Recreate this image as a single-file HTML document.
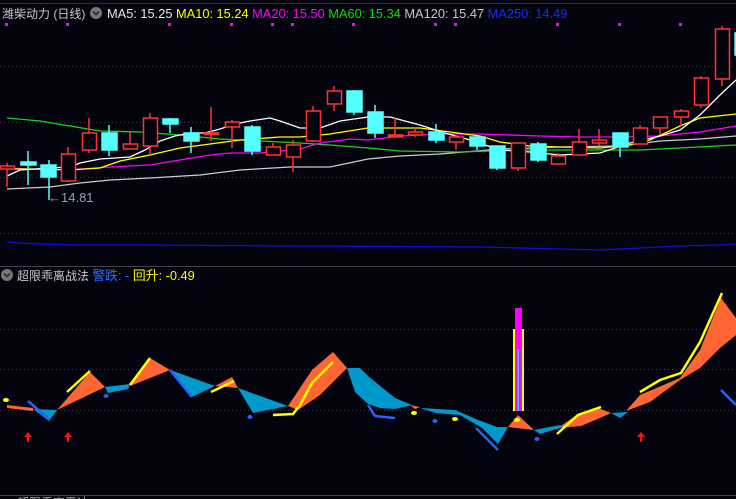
<!DOCTYPE html>
<html><head><meta charset="utf-8"><style>
html,body{margin:0;padding:0;background:#04040f;width:736px;height:499px;overflow:hidden;font-family:"Liberation Sans","Noto Sans CJK SC",sans-serif}
svg{position:absolute;left:0;top:0}
.t{font-size:12.8px;font-family:"Liberation Sans","Noto Sans CJK SC",sans-serif}
</style></head><body>
<svg width="736" height="499" viewBox="0 0 736 499">
<rect width="736" height="499" fill="#04040f"/>
<g stroke="#3c3c46" stroke-dasharray="1,3" stroke-width="1">
<line x1="0" y1="66.5" x2="736" y2="66.5"/><line x1="0" y1="122.5" x2="736" y2="122.5"/>
<line x1="0" y1="177.5" x2="736" y2="177.5"/><line x1="0" y1="233.5" x2="736" y2="233.5"/>
<line x1="0" y1="329.5" x2="736" y2="329.5"/><line x1="0" y1="369.5" x2="736" y2="369.5"/>
<line x1="0" y1="410.5" x2="736" y2="410.5"/>
</g>
<line x1="0" y1="266.5" x2="736" y2="266.5" stroke="#444" />
<line x1="0" y1="495.5" x2="736" y2="495.5" stroke="#444"/>
<line x1="0" y1="3.5" x2="736" y2="3.5" stroke="#333"/>
<g fill="none" stroke-width="1.3">
<polyline stroke="#0a10e0" points="7,242 18,243 40,244 80,245 140,245 300,246 480,247 560,249 600,250 640,248 680,246 720,245 736,244"/>
<polyline stroke="#ccc" points="7,189 50,187 80,183 110,180 150,178 200,175 240,170 290,167 330,167 368,159 400,156 440,154 500,149 560,147 620,146 660,141 700,139 736,136"/>
<polyline stroke="#1ed01e" points="7,118 40,121 70,126 100,131 140,132 180,135 220,139 260,141 300,143 330,145 368,148 400,151 460,152 520,150 580,150 640,150 680,148 736,145"/>
<polyline stroke="#f0f" points="7,168 50,170 80,169 110,167 150,165 180,160 210,155 230,153 260,153 300,149 320,143 350,139 368,140 400,136 440,134 480,134 540,136 580,137 620,137 660,136 700,132 736,126"/>
<polyline stroke="#ff0" points="7,169 40,169 70,170 100,168 120,161 150,155 180,148 210,144 240,140 280,137 300,137 330,134 368,128 420,128 450,132 480,136 500,142 530,146 560,147 600,148 630,145 650,140 680,126 700,118 736,114"/>
<polyline stroke="#fff" points="7,176 20,170 50,168 70,167 80,163 100,159 130,157 145,150 160,141 175,136 190,133 205,133 220,129 235,124 250,121 270,118 280,121 300,128 320,128 340,121 368,117 390,117 420,125 445,133 470,140 500,150 530,152 560,155 600,153 630,143 660,136 680,130 700,115 720,95 736,80"/>
</g>
<g stroke-width="1.5">
<g stroke="#ff3333" fill="#04040f">
<line x1="7" y1="163" x2="7" y2="187"/><rect x="0.5" y="166" width="14" height="3"/>
<line x1="68" y1="147" x2="68" y2="182"/><rect x="61.5" y="154" width="14" height="27"/>
<line x1="89" y1="118" x2="89" y2="153"/><rect x="82.5" y="133" width="14" height="17"/>
<line x1="130" y1="132" x2="130" y2="149"/><rect x="123.5" y="144" width="14" height="5"/>
<line x1="150" y1="113" x2="150" y2="155"/><rect x="143.5" y="118" width="14" height="28"/>
<line x1="211" y1="107" x2="211" y2="141"/><rect x="204.5" y="133" width="14" height="1.5" fill="#ff3333"/>
<line x1="232" y1="120" x2="232" y2="148"/><rect x="225.5" y="122" width="14" height="5"/>
<line x1="273" y1="143" x2="273" y2="155"/><rect x="266.5" y="147" width="14" height="8"/>
<line x1="293" y1="140" x2="293" y2="172"/><rect x="286.5" y="145" width="14" height="12"/>
<line x1="313" y1="106" x2="313" y2="142"/><rect x="306.5" y="111" width="14" height="30"/>
<line x1="334" y1="86" x2="334" y2="111"/><rect x="327.5" y="91" width="14" height="13"/>
<line x1="395" y1="117" x2="395" y2="137"/><rect x="388.5" y="135" width="14" height="2" fill="#ff3333"/>
<line x1="415" y1="127" x2="415" y2="137"/><rect x="408.5" y="132" width="14" height="3"/>
<line x1="456" y1="135" x2="456" y2="150"/><rect x="449.5" y="137" width="14" height="5"/>
<line x1="518" y1="143" x2="518" y2="171"/><rect x="511.5" y="143" width="14" height="25"/>
<line x1="558" y1="153" x2="558" y2="164"/><rect x="551.5" y="156" width="14" height="8"/>
<line x1="579" y1="129" x2="579" y2="155"/><rect x="572.5" y="142" width="14" height="13"/>
<line x1="599" y1="129" x2="599" y2="146"/><rect x="592.5" y="140" width="14" height="3"/>
<line x1="640" y1="125" x2="640" y2="144"/><rect x="633.5" y="128" width="14" height="16"/>
<line x1="660" y1="117" x2="660" y2="135"/><rect x="653.5" y="117" width="14" height="11"/>
<line x1="681" y1="109" x2="681" y2="126"/><rect x="674.5" y="111" width="14" height="6"/>
<line x1="701" y1="76" x2="701" y2="108"/><rect x="694.5" y="78" width="14" height="27"/>
<line x1="722" y1="26" x2="722" y2="86"/><rect x="715.5" y="29" width="14" height="50"/>
</g>
<g stroke="#55ffff" fill="#55ffff">
<line x1="28" y1="151" x2="28" y2="185"/><rect x="21" y="162" width="15" height="3"/>
<line x1="49" y1="160" x2="49" y2="200"/><rect x="41" y="165" width="15" height="12"/>
<line x1="109" y1="125" x2="109" y2="156"/><rect x="102" y="133" width="15" height="17"/>
<line x1="170" y1="118" x2="170" y2="133"/><rect x="163" y="119" width="15" height="5"/>
<line x1="191" y1="127" x2="191" y2="153"/><rect x="184" y="133" width="15" height="8"/>
<line x1="252" y1="125" x2="252" y2="155"/><rect x="245" y="127" width="15" height="24"/>
<line x1="354" y1="90" x2="354" y2="115"/><rect x="347" y="91" width="15" height="21"/>
<line x1="375" y1="105" x2="375" y2="138"/><rect x="368" y="112" width="15" height="21"/>
<line x1="436" y1="124" x2="436" y2="143"/><rect x="429" y="132" width="15" height="8"/>
<line x1="477" y1="136" x2="477" y2="150"/><rect x="470" y="137" width="15" height="9"/>
<line x1="497" y1="146" x2="497" y2="170"/><rect x="490" y="146" width="15" height="22"/>
<line x1="538" y1="142" x2="538" y2="162"/><rect x="531" y="144" width="15" height="16"/>
<line x1="620" y1="133" x2="620" y2="157"/><rect x="613" y="133" width="15" height="14"/>
<rect x="735" y="33" width="3" height="22"/>
</g>
</g>
<text x="48" y="202" fill="#8aa0b8" font-size="13" font-family="Liberation Sans, sans-serif">←14.81</text>
<g fill="#ff00ff">
<rect x="5" y="23" width="3" height="3"/><rect x="66" y="23" width="3" height="3"/><rect x="168" y="23" width="3" height="3"/><rect x="230" y="23" width="3" height="3"/><rect x="271" y="23" width="3" height="3"/><rect x="291" y="23" width="3" height="3"/><rect x="352" y="23" width="3" height="3"/><rect x="434" y="23" width="3" height="3"/><rect x="454" y="23" width="3" height="3"/><rect x="556" y="23" width="3" height="3"/><rect x="618" y="23" width="3" height="3"/><rect x="679" y="23" width="3" height="3"/>
</g>
<text x="2" y="18" class="t" font-size="12" style="font-size:12px" fill="#c8c8c8">潍柴动力 (日线)</text>
<circle cx="96" cy="13" r="6" fill="#777"/><path d="M93 11.5l3 3 3-3" stroke="#222" stroke-width="1.5" fill="none"/>
<text x="107" y="18" class="t"><tspan fill="#e8e8e8">MA5: 15.25 </tspan><tspan fill="#ffff00"> MA10: 15.24 </tspan><tspan fill="#ff00ff"> MA20: 15.50 </tspan><tspan fill="#00e000"> MA60: 15.34 </tspan><tspan fill="#c8c8c8"> MA120: 15.47 </tspan><tspan fill="#1030ff"> MA250: 14.49</tspan></text>
<circle cx="7" cy="275" r="6" fill="#777"/><path d="M4 273.5l3 3 3-3" stroke="#222" stroke-width="1.5" fill="none"/>
<text x="17" y="280" class="t"><tspan fill="#c8c8c8" style="font-size:12px">超限乖离战法 </tspan><tspan fill="#2a70ff"> 警跌: - </tspan><tspan fill="#ffff00"> 回升: -0.49</tspan></text>
<g fill="#ff6633">
<polygon points="7,405 33,408 33,411 7,408"/>
<polygon points="57,410 90,372 105,387"/>
<polygon points="130,386 150,358 170,370"/>
<polygon points="215,386 232,377 238,388"/>
<polygon points="288,406 312,370 333,352 347,368 320,395 298,410"/>
<polygon points="410,405 420,407 415,409"/>
<polygon points="508,427 518,415 534,430"/>
<polygon points="558,428 578,414 598,408 611,413 600,418 581,426"/>
<polygon points="626,411 640,395 680,378 700,350 721,298 736,318 736,335 720,348 700,368 680,380 650,402"/>
</g>
<g fill="#0099cc">
<polygon points="33,409 57,410 49,421"/>
<polygon points="105,387 130,384 128,389 108,393"/>
<polygon points="170,370 215,386 192,397"/>
<polygon points="238,388 288,406 253,413"/>
<polygon points="347,368 360,368 368,376 395,398 412,405 395,409 380,408 368,404 355,392"/>
<polygon points="420,408 455,410 478,420 497,427 508,427 498,444 482,428 460,415 436,413"/>
<polygon points="534,430 560,425 563,427 540,434"/>
<polygon points="611,413 628,412 620,418"/>
</g>
<g fill="none" stroke="#ffff00" stroke-width="2.5">
<line x1="67" y1="392" x2="90" y2="371"/>
<line x1="130" y1="385" x2="150" y2="358"/>
<line x1="211" y1="392" x2="234" y2="381"/>
<polyline points="273,415 293,414 300,405 312,383 333,362"/>
<polyline points="557,434 578,415 598,408 601,407"/>
<polyline points="640,392 660,380 681,373 700,342 722,293"/>
</g>
<g fill="none" stroke="#2a60ff" stroke-width="2.5">
<line x1="28" y1="401" x2="50" y2="420"/>
<line x1="170" y1="370" x2="192" y2="397"/>
<polyline points="368,405 375,416 395,418"/>
<line x1="476" y1="428" x2="498" y2="450"/>
<line x1="721" y1="390" x2="736" y2="405"/>
</g>
<g fill="#ffff00"><ellipse cx="6" cy="400" rx="3" ry="2"/><ellipse cx="414" cy="413" rx="3" ry="2"/><ellipse cx="455" cy="419" rx="3" ry="2"/><ellipse cx="517" cy="420" rx="3" ry="2"/></g>
<g fill="#2a60ff"><ellipse cx="250" cy="417" rx="2.5" ry="2"/><ellipse cx="435" cy="421" rx="2.5" ry="2"/><ellipse cx="537" cy="439" rx="2.5" ry="2"/><ellipse cx="106" cy="396" rx="2.5" ry="2"/></g>
<rect x="513" y="329" width="11" height="82" fill="#ffff00"/>
<rect x="515" y="308" width="7" height="103" fill="#ff00ff"/>
<rect x="517.5" y="349" width="1.5" height="62" fill="#33ccff"/>
<g fill="#ff1010">
<polygon points="28,432 24,437 27,437 27,442 29,442 29,437 32,437"/>
<polygon points="68,432 64,437 67,437 67,442 69,442 69,437 72,437"/>
<polygon points="641,432 637,437 640,437 640,442 642,442 642,437 645,437"/>
</g>
<text x="17" y="507" style="font-size:12px" class="t" fill="#aaa">超限乖离雷达</text>
</svg>
</body></html>
